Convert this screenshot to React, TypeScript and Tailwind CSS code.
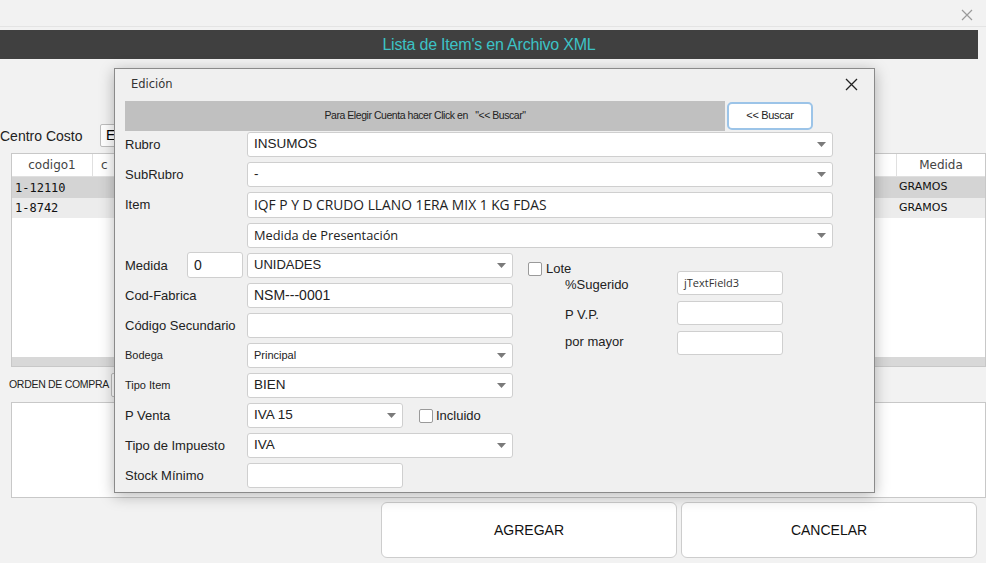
import React from "react";

const F = { fontFamily: '"Liberation Sans", Arial, sans-serif' };

function Arrow() {
  return (
    <svg width="9" height="5" viewBox="0 0 9 5" className="shrink-0">
      <path d="M0 0 L9 0 L4.5 5 Z" fill="#7a7a7a" />
    </svg>
  );
}

function Combo({ text, w, small, sz = "text-[13.5px]", font }: { text: string; w: string; small?: boolean; sz?: string; font?: string }) {
  return (
    <div className={`${w} h-[25px] bg-white border border-[#cfcfcf] rounded-[3px] flex items-center pl-[6px] pr-[6px]`}>
      <span className={`flex-1 text-[#222] ${small ? "text-[11px]" : sz}`} style={font ? { fontFamily: font } : undefined}>{text}</span>
      <Arrow />
    </div>
  );
}

function Field({ text, w, h = "h-[25px]", sz = "text-[14px]", color = "text-[#222]", font }: { text?: string; w: string; h?: string; sz?: string; color?: string; font?: string }) {
  return (
    <div className={`${w} ${h} bg-white border border-[#cfcfcf] rounded-[3px] flex items-center pl-[6px] ${sz} ${color}`} style={font ? { fontFamily: font } : undefined}>
      {text}
    </div>
  );
}

function Check() {
  return <div className="w-[14px] h-[14px] bg-white border border-[#9a9a9a] rounded-[2px]" />;
}

function Label({ children, small }: { children: React.ReactNode; small?: boolean }) {
  return <div className={`w-[122px] shrink-0 text-[#222] whitespace-nowrap ${small ? "text-[11px]" : "text-[13px]"}`}>{children}</div>;
}

export default function App() {
  return (
    <div className="relative w-[986px] h-[563px] bg-[#f2f2f2] overflow-hidden" style={F}>
      {/* page */}
      <div className="flex flex-col h-full">
        <div className="h-[27px] border-b border-[#e4e4e4] flex justify-end items-center pr-[13px] pt-[3px]">
          <svg width="12" height="12" viewBox="0 0 12 12">
            <path d="M1 1 L11 11 M11 1 L1 11" stroke="#9a9a9a" strokeWidth="1.2" />
          </svg>
        </div>
        <div className="mt-[3px] w-[978px] h-[29px] bg-[#404040] flex items-center justify-center">
          <span className="text-[16px] text-[#3cc3c6] tracking-[-0.2px]">Lista de Item's en Archivo XML</span>
        </div>
        <div className="mt-[65px] flex items-center h-[23px]">
          <span className="text-[14px] text-[#222] w-[100px] pt-[2px]">Centro Costo</span>
          <div className="w-[60px] h-[23px] bg-white border border-[#bdbdbd] rounded-[2px] text-[14px] pl-[5px] flex items-center">E</div>
        </div>
        <div className="mt-[6px] ml-[11px] h-[214px] border border-[#c8c8c8] bg-white flex flex-col">
          <div className="h-[23px] flex border-b border-[#e0e0e0] text-[12px] text-[#444]" style={{ fontFamily: '"DejaVu Sans", sans-serif' }}>
            <div className="w-[81px] border-r border-[#e0e0e0] flex items-center justify-center">codigo1</div>
            <div className="flex-1 pl-[8px] flex items-center">c</div>
            <div className="w-[89px] border-l border-[#e0e0e0] flex items-center justify-center">Medida</div>
          </div>
          <div className="h-[21px] bg-[#d4d4d4] flex items-center text-[12px] text-[#111]">
            <span className="flex-1 pl-[3px]" style={{ fontFamily: '"DejaVu Sans Mono", monospace' }}>1-12110</span>
            <span className="w-[86px] text-[11px]" style={{ fontFamily: '"DejaVu Sans", sans-serif' }}>GRAMOS</span>
          </div>
          <div className="h-[20px] bg-[#ececec] flex items-center text-[12px] text-[#111]">
            <span className="flex-1 pl-[3px]" style={{ fontFamily: '"DejaVu Sans Mono", monospace' }}>1-8742</span>
            <span className="w-[86px] text-[11px]" style={{ fontFamily: '"DejaVu Sans", sans-serif' }}>GRAMOS</span>
          </div>
          <div className="flex-1" />
          <div className="h-[9px] bg-[#d8d8d8]" />
        </div>
        <div className="mt-[6px] flex items-center h-[24px] pl-[9px]">
          <span className="text-[10.5px] text-[#222] w-[102px] whitespace-nowrap tracking-[-0.3px]">ORDEN DE COMPRA</span>
          <div className="w-[60px] h-[24px] bg-white border border-[#bdbdbd] rounded-[2px]" />
        </div>
        <div className="mt-[5px] ml-[11px] h-[96px] bg-white border border-[#c8c8c8]" />
        <div className="mt-[4px] ml-[381px] flex gap-[4px]">
          <div className="w-[296px] h-[56px] bg-white border border-[#cdcdcd] rounded-[6px] flex items-center justify-center text-[14px] text-[#111]">AGREGAR</div>
          <div className="w-[296px] h-[56px] bg-white border border-[#cdcdcd] rounded-[6px] flex items-center justify-center text-[14px] text-[#111]">CANCELAR</div>
        </div>
      </div>

      {/* dialog */}
      <div className="absolute left-[114px] top-[68px] w-[761px] h-[425px] bg-[#f0f0f0] border border-[#8a8a8a] shadow-[0_3px_14px_rgba(0,0,0,0.28)] flex flex-col px-[10px]">
        <div className="h-[31px] flex items-center justify-between pl-[6px] pr-[6px]">
          <span className="text-[#333]" style={{ fontFamily: '"DejaVu Sans", sans-serif', fontSize: 11.5 }}>Edición</span>
          <svg width="13" height="13" viewBox="0 0 13 13">
            <path d="M1 1 L12 12 M12 1 L1 12" stroke="#222" strokeWidth="1.3" />
          </svg>
        </div>
        <div className="flex items-center h-[31px]">
          <div className="w-[600px] h-[30px] bg-[#c0c0c0] flex items-center justify-center">
            <span className="text-[10.5px] text-[#222] tracking-[-0.45px] whitespace-pre">Para Elegir Cuenta hacer Click en   "&lt;&lt; Buscar"</span>
          </div>
          <div className="ml-[2px] w-[86px] h-[28px] bg-white border-2 border-[#9cc4e8] rounded-[5px] flex items-center justify-center text-[11px] tracking-[-0.3px] text-[#222]">&lt;&lt; Buscar</div>
        </div>
        <div className="mt-[1px] flex flex-col gap-[5px]">
          <div className="flex items-center"><Label>Rubro</Label><Combo text="INSUMOS" w="w-[586px]" /></div>
          <div className="flex items-center"><Label>SubRubro</Label><Combo text="-" w="w-[586px]" /></div>
          <div className="flex items-center"><Label>Item</Label>
            <Field w="w-[586px]" h="h-[26px]" text="IQF P Y D CRUDO LLANO 1ERA MIX 1 KG FDAS" sz="text-[13.8px]" font='"Open Sans", sans-serif' />
          </div>
          <div className="flex items-center"><Label>{""}</Label><Combo text="Medida de Presentación" w="w-[586px]" sz="text-[12.8px]" font='"Open Sans", sans-serif' /></div>
          <div className="flex -mt-[1px]">
            <div className="flex flex-col gap-[5px]">
              <div className="flex items-center h-[26px]">
                <div className="w-[62px] text-[13px] text-[#222] pt-[2px]">Medida</div>
                <Field w="w-[56px]" h="h-[26px]" text="0" />
                <div className="ml-[4px]"><Combo text="UNIDADES" w="w-[266px]" sz="text-[13px]" /></div>
              </div>
              <div className="flex items-center"><Label>Cod-Fabrica</Label><Field w="w-[266px]" text="NSM---0001" /></div>
              <div className="flex items-center"><Label>Código Secundario</Label><Field w="w-[266px]" /></div>
              <div className="flex items-center"><Label small>Bodega</Label><Combo text="Principal" w="w-[266px]" small /></div>
              <div className="flex items-center"><Label small>Tipo Item</Label><Combo text="BIEN" w="w-[266px]" /></div>
              <div className="flex items-center"><Label>P Venta</Label><Combo text="IVA 15" w="w-[156px]" />
                <div className="ml-[16px] flex items-center gap-[3px]"><Check /><span className="text-[13px] text-[#222]">Incluido</span></div>
              </div>
              <div className="flex items-center"><Label>Tipo de Impuesto</Label><Combo text="IVA" w="w-[266px]" /></div>
              <div className="flex items-center"><Label>Stock Mínimo</Label><Field w="w-[156px]" /></div>
            </div>
            <div className="ml-[15px] flex flex-col">
              <div className="mt-[10px] flex items-center gap-[4px] h-[14px]"><Check /><span className="text-[13px] text-[#222]">Lote</span></div>
              <div className="mt-[-5px] flex flex-col gap-[6px]">
                <div className="flex items-center"><span className="ml-[37px] w-[112px] text-[13px] text-[#222] pt-[3px]">%Sugerido</span>
                  <Field w="w-[106px]" h="h-[24px]" text="jTextField3" sz="text-[11px]" color="text-[#333]" font='"Open Sans", sans-serif' /></div>
                <div className="flex items-center"><span className="ml-[37px] w-[112px] text-[13px] text-[#222] pt-[3px]">P V.P.</span>
                  <Field w="w-[106px]" h="h-[24px]" /></div>
                <div className="flex items-center"><span className="ml-[37px] w-[112px] text-[13px] text-[#222] -mt-[3px]">por mayor</span>
                  <Field w="w-[106px]" h="h-[24px]" /></div>
              </div>
            </div>
          </div>
        </div>
      </div>
    </div>
  );
}
